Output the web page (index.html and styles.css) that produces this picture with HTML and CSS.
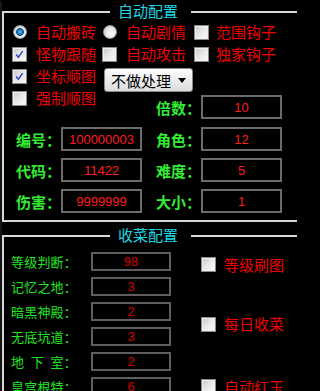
FILE: index.html
```html
<!DOCTYPE html>
<html lang="zh-CN">
<head>
<meta charset="utf-8">
<title>配置</title>
<link rel="stylesheet" href="styles.css">
</head>
<body>
<div class="page">
  <section class="group g1">
    <header class="group-head"><span class="hl hl-left"></span><h2 class="group-title">自动配置</h2><span class="hl hl-right"></span></header>
    <div class="group-body">
      <div class="opts">
        <div class="opt"><span class="radio on"></span><span>自动搬砖</span></div>
        <div class="opt"><span class="radio"></span><span>自动剧情</span></div>
        <div class="opt opt-c3"><span class="check"></span><span>范围钩子</span></div>

        <div class="opt"><span class="check on"><svg viewBox="0 0 15 15"><path d="M3.6 7.4 L6.2 10.6 L11.2 3.6"/></svg></span><span>怪物跟随</span></div>
        <div class="opt"><span class="check"></span><span>自动攻击</span></div>
        <div class="opt opt-c3"><span class="check"></span><span>独家钩子</span></div>

        <div class="opt"><span class="check on"><svg viewBox="0 0 15 15"><path d="M3.6 7.4 L6.2 10.6 L11.2 3.6"/></svg></span><span>坐标顺图</span></div>
        <div class="select"><span>不做处理</span><svg class="arrow" viewBox="0 0 8 5"><path d="M0 0 H8 L4 5 Z"/></svg></div>
      </div>
      <div class="fields">
        <div class="opt opt-solo"><span class="check"></span><span>强制顺图</span></div>
        <div class="field f-right r-bei"><span class="field-label">倍数：</span><span class="field-box">10</span></div>
        <div class="field f-left r-2"><span class="field-label">编号：</span><span class="field-box">100000003</span></div>
        <div class="field f-right r-2"><span class="field-label">角色：</span><span class="field-box">12</span></div>
        <div class="field f-left r-3"><span class="field-label">代码：</span><span class="field-box">11422</span></div>
        <div class="field f-right r-3"><span class="field-label">难度：</span><span class="field-box">5</span></div>
        <div class="field f-left r-4"><span class="field-label">伤害：</span><span class="field-box">9999999</span></div>
        <div class="field f-right r-4"><span class="field-label">大小：</span><span class="field-box">1</span></div>
      </div>
    </div>
  </section>

  <section class="group g2">
    <header class="group-head"><span class="hl hl-left"></span><h2 class="group-title">收菜配置</h2><span class="hl hl-right"></span></header>
    <div class="group-body">
      <div class="harvest">
        <span class="h-label c1 row1">等级判断：</span><span class="h-box c2 row1">98</span>
        <span class="h-label c1 row2">记忆之地：</span><span class="h-box c2 row2">3</span>
        <span class="h-label c1 row3">暗黑神殿：</span><span class="h-box c2 row3">2</span>
        <span class="h-label c1 row4">无底坑道：</span><span class="h-box c2 row4">3</span>
        <span class="h-label c1 row5 spaced">地 下 室：</span><span class="h-box c2 row5">2</span>
        <span class="h-label c1 row6">皇宫根特：</span><span class="h-box c2 row6">6</span>
        <div class="opt opt2 row1"><span class="check"></span><span>等级刷图</span></div>
        <div class="opt opt2 row34"><span class="check"></span><span>每日收菜</span></div>
        <div class="opt opt2 row6"><span class="check"></span><span>自动红玉</span></div>
      </div>
    </div>
  </section>
</div>
</body>
</html>
```

FILE: styles.css
```css
* { box-sizing: border-box; margin: 0; padding: 0; }

html, body { background: #000; }

body {
  width: 297px;
  height: 391px;
  overflow: hidden;
  font-family: "Noto Sans CJK SC", "Noto Sans", sans-serif;
}

.page {
  border-left: 2px solid #161616;
  min-height: 391px;
}

.group { width: 330px; }

.g1 { margin-top: 1px; }
.g2 { margin-top: 3px; }

.group-head {
  display: flex;
  height: 20px;
}

.hl {
  align-self: flex-end;
  height: 10px;
  border-top: 2px solid #d6d6d6;
}

.hl-left {
  width: 108px;
  border-left: 2px solid #d6d6d6;
}

.hl-right { flex: 1; }

.group-title {
  width: 81px;
  padding-left: 8px;
  font-size: 15px;
  font-weight: normal;
  line-height: 20px;
  color: #1cd8e4;
  white-space: nowrap;
}

.group-body {
  border-left: 2px solid #d6d6d6;
  border-bottom: 2px solid #d6d6d6;
}

/* option rows */
.opts {
  display: grid;
  grid-template-columns: 90px 92px 1fr;
  grid-auto-rows: 22px;
  padding-left: 8px;
}

.opt {
  display: flex;
  align-items: center;
  gap: 9px;
  height: 22px;
  color: #f00000;
  font-size: 15px;
  line-height: 22px;
  white-space: nowrap;
}

.opt-c3 { gap: 7px; }

.check {
  flex: none;
  width: 15px;
  height: 15px;
  border: 1px solid #8a8a8a;
  background: linear-gradient(135deg, #c4c4c4 0%, #e6e6e6 45%, #fbfbfb 100%);
  box-shadow: inset 0 0 0 1px #efefef;
  display: flex;
  align-items: center;
  justify-content: center;
}

.check svg {
  width: 13px;
  height: 13px;
  fill: none;
  stroke: #3448c0;
  stroke-width: 1.7;
}

.radio {
  flex: none;
  width: 14px;
  height: 14px;
  margin: 0 0.5px;
  border-radius: 50%;
  border: 1px solid #9c9c9c;
  background: radial-gradient(circle at 60% 65%, #ffffff 0%, #e2e2e2 55%, #bdbdbd 100%);
}

.radio.on {
  background:
    radial-gradient(circle at 50% 50%, #62b6ea 0, #2a86c8 2px, #0d4f8a 3.6px, transparent 4.2px),
    radial-gradient(circle at 60% 65%, #ffffff 0%, #e2e2e2 55%, #bdbdbd 100%);
}

.select {
  align-self: start;
  margin-top: 3px;
  margin-left: 2px;
  width: 89px;
  height: 24px;
  display: flex;
  align-items: center;
  justify-content: space-between;
  padding: 0 6px 0 6px;
  border: 1px solid #8a8a8a;
  border-radius: 3px;
  background: linear-gradient(#fdfdfd, #dcdcdc);
  color: #000;
  font-size: 15px;
  white-space: nowrap;
}

.arrow {
  width: 8px;
  height: 5px;
  fill: #000;
}

/* numeric fields */
.fields {
  display: grid;
  grid-template-columns: 146px 1fr;
  grid-template-rows: 8px 24px 8px 24px 7px 24px 7px 24px;
  padding-bottom: 7px;
}

.opt-solo {
  grid-column: 1;
  grid-row: 1 / span 2;
  align-self: start;
  padding-left: 8px;
}

.r-bei { grid-column: 2; grid-row: 2; }
.r-2 { grid-row: 4; }
.r-3 { grid-row: 6; }
.r-4 { grid-row: 8; }
.f-left { grid-column: 1; padding-left: 12px; }
.f-right { grid-column: 2; padding-left: 6px; }

.field {
  display: flex;
  align-items: center;
}

.field-label {
  width: 45px;
  color: #34ec34;
  font-size: 15px;
  font-weight: bold;
  white-space: nowrap;
}

.field-box {
  width: 81px;
  height: 24px;
  border: 2px solid #6c6c6c;
  display: flex;
  align-items: center;
  justify-content: center;
  color: #ff1c1c;
  font-family: "Liberation Sans", sans-serif;
  font-size: 13px;
}

/* harvest group */
.harvest {
  display: grid;
  grid-template-columns: 80px 80px 1fr;
  grid-template-rows: repeat(6, 19px);
  row-gap: 6px;
  column-gap: 0;
  padding: 7px 0 8px 7px;
}

.c1 { grid-column: 1; }
.c2 { grid-column: 2; }
.row1 { grid-row: 1; }
.row2 { grid-row: 2; }
.row3 { grid-row: 3; }
.row4 { grid-row: 4; }
.row5 { grid-row: 5; }
.row6 { grid-row: 6; }
.row34 { grid-row: 3 / span 2; align-self: center; }

.h-label {
  color: #22e422;
  font-size: 13px;
  letter-spacing: 0.2px;
  line-height: 19px;
  white-space: pre;
}

.spaced { word-spacing: 3.5px; }

.h-box {
  height: 19px;
  border: 2px solid #5e5e5e;
  display: flex;
  align-items: center;
  justify-content: center;
  color: #d20000;
  font-family: "Liberation Sans", sans-serif;
  font-size: 13px;
}

.opt2 {
  grid-column: 3;
  padding-left: 30px;
  gap: 8px;
  height: 19px;
}

.opt2.row1 { margin-top: 3px; }
```
